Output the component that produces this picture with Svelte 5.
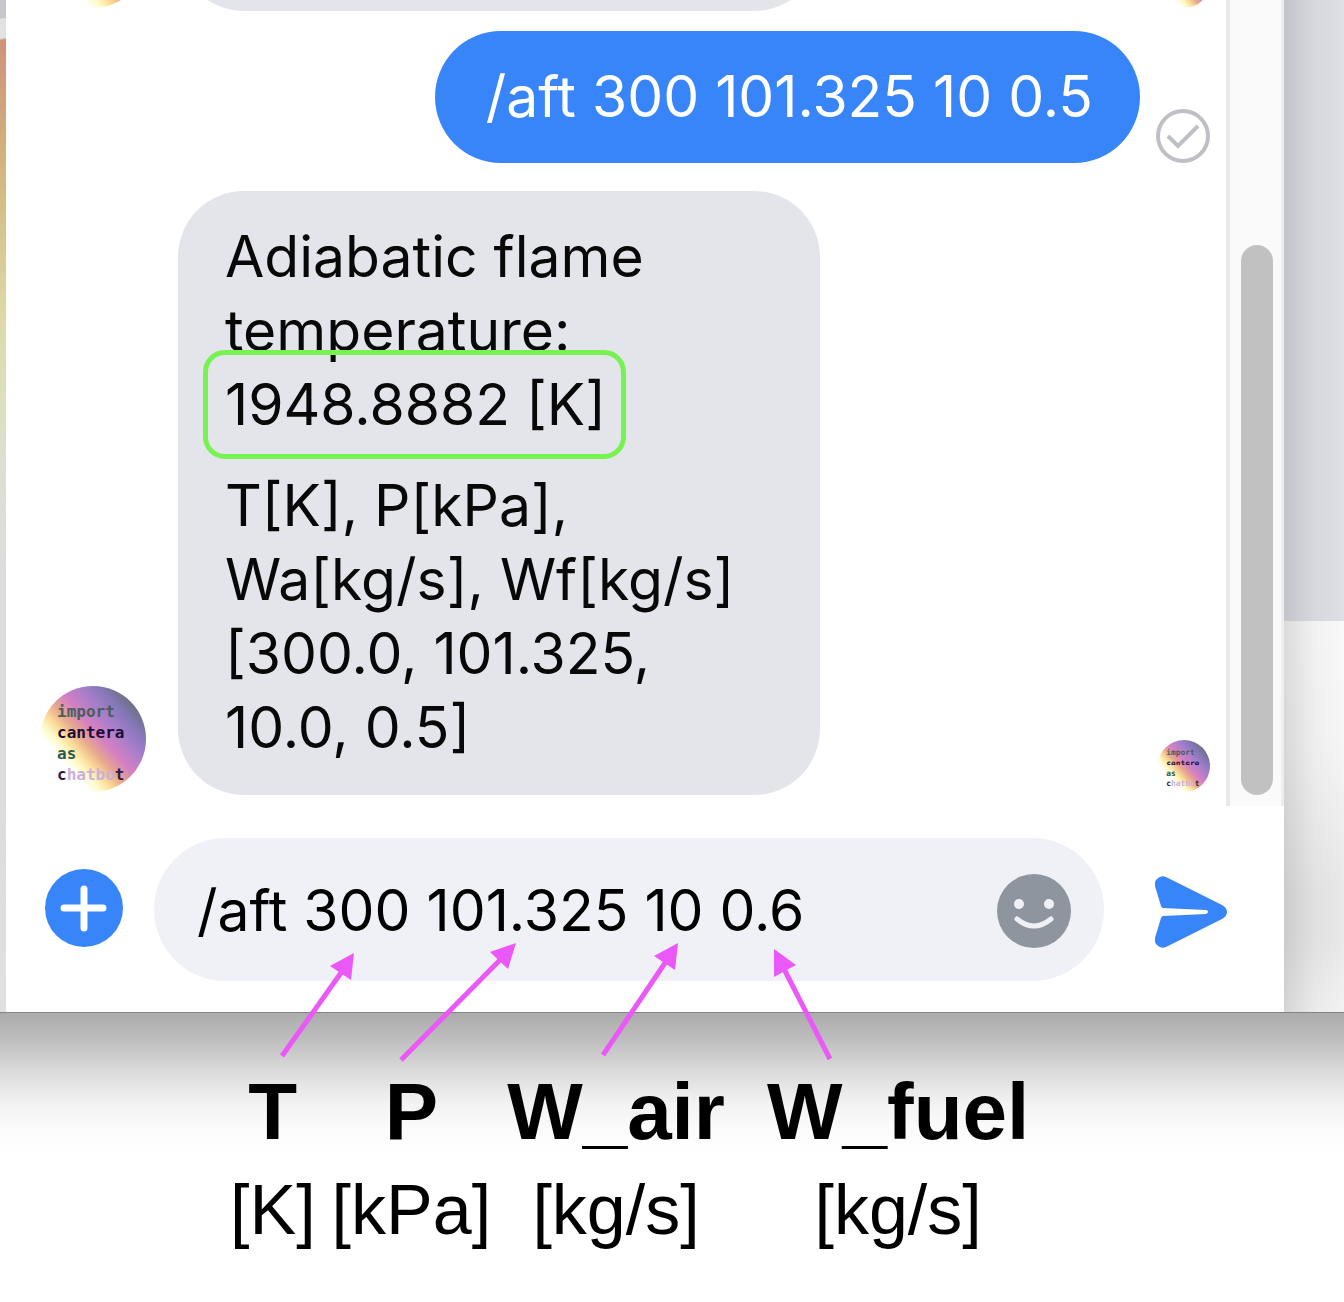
<script lang="ts">
  let draft = $state('/aft 300 101.325 10 0.6');

  const params = [
    { name: 'T', unit: '[K]' },
    { name: 'P', unit: '[kPa]' },
    { name: 'W_air', unit: '[kg/s]' },
    { name: 'W_fuel', unit: '[kg/s]' }
  ];

  const arrows = [
    { line: 'M282 1056L343 970', head: '354,953 330,966 351,980' },
    { line: 'M401 1060L502 958', head: '516,943 490,952 508,969' },
    { line: 'M603 1055L667 960', head: '678,943 654,956 675,970' },
    { line: 'M830 1059L783 967', head: '774,949 774,977 796,965' }
  ];
</script>

{#snippet avatar(size: string, id: string, lettered: boolean)}
  <svg class="avatar {size}" viewBox="0 0 106 106" role="img" aria-label="import cantera as chatbot">
    <defs>
      <linearGradient {id} gradientUnits="userSpaceOnUse" x1="24" y1="77" x2="93" y2="16">
        <stop offset="0" stop-color="#ffffff" />
        <stop offset="0.1" stop-color="#fffbcc" />
        <stop offset="0.2" stop-color="#fbdf9a" />
        <stop offset="0.33" stop-color="#e8a98c" />
        <stop offset="0.48" stop-color="#d680c2" />
        <stop offset="0.68" stop-color="#a67ecb" />
        <stop offset="0.84" stop-color="#8577b8" />
        <stop offset="1" stop-color="#6a7080" />
      </linearGradient>
    </defs>
    <circle cx="53" cy="53" r="53" fill="url(#{id})" />
    {#if lettered}
      <g class="logo-text">
        <text x="17" y="31" fill="#46605c">import</text>
        <text x="17" y="52" fill="#1c0c38">cantera</text>
        <text x="17" y="73" fill="#2c5a48">as</text>
        <text x="17" y="94" fill="#2a1c4c">c<tspan fill="#c9b0dc">hatbo</tspan>t</text>
      </g>
    {/if}
  </svg>
{/snippet}

<main class="page">
  <div class="desktop">
    <div class="edge-left"></div>
    <section class="window">
      <div class="history">
        <div class="messages">
          <div class="row previous">
            <div class="sender">{@render avatar('large', 'flame-a', false)}</div>
            <div class="bubble received stub"></div>
            <div class="status">{@render avatar('small', 'flame-b', false)}</div>
          </div>
          <div class="row outgoing">
            <p class="bubble sent">/aft 300 101.325 10 0.5</p>
            <div class="status">
              <svg class="check" viewBox="0 0 54 54" role="img" aria-label="Sent">
                <circle cx="27" cy="27" r="25" />
                <path d="M12 27L22 37L42 17" />
              </svg>
            </div>
          </div>
          <div class="row incoming">
            <div class="sender">{@render avatar('large', 'flame-c', true)}</div>
            <div class="bubble received">
              <p>Adiabatic flame<br />temperature:<br /><span class="result">1948.8882 [K]</span></p>
              <p>T[K], P[kPa],<br />Wa[kg/s], Wf[kg/s]<br />[300.0, 101.325,<br />10.0, 0.5]</p>
            </div>
            <div class="status">{@render avatar('small', 'flame-d', true)}</div>
          </div>
        </div>
        <div class="scrollbar"><div class="thumb"></div></div>
      </div>
      <form class="composer" onsubmit={(e) => e.preventDefault()}>
        <button class="plus" type="button" aria-label="More actions">
          <svg viewBox="0 0 78 78">
            <circle cx="39" cy="39" r="39" fill="#3785f8" />
            <path d="M39 20V59M19 39H58" stroke="#fff" stroke-width="7" stroke-linecap="round" />
          </svg>
        </button>
        <div class="field">
          <input type="text" aria-label="Message" bind:value={draft} />
          <button class="emoji" type="button" aria-label="Choose an emoji">
            <svg viewBox="0 0 74 74">
              <circle cx="37" cy="37" r="37" fill="#8e959f" />
              <circle cx="22" cy="30" r="5" fill="#f0f1f6" />
              <circle cx="52" cy="30" r="5" fill="#f0f1f6" />
              <path d="M20 45Q37 59 54 45" fill="none" stroke="#f0f1f6" stroke-width="5" stroke-linecap="round" />
            </svg>
          </button>
        </div>
        <button class="send" type="submit" aria-label="Send">
          <svg viewBox="0 0 72 72">
            <path
              fill="#3785f8"
              d="M11 1L67 29Q72 32 72 36Q72 40 67 43L11 71Q6 73 2 69Q-1 66 0 62L6 42Q7 40 8 40L51 38Q53 37 53 36Q53 34 51 34L8 32Q7 32 6 30L0 10Q-1 6 2 3Q6 -1 11 1Z"
            />
          </svg>
        </button>
      </form>
    </section>
    <div class="edge-right"></div>
  </div>

  <dl class="legend">
    {#each params as p}
      <div class="param">
        <dt>{p.name}</dt>
        <dd>{p.unit}</dd>
      </div>
    {/each}
  </dl>

  <svg class="arrows" viewBox="0 0 1344 1302" aria-hidden="true">
    {#each arrows as a}
      <path d={a.line} />
      <polygon points={a.head} />
    {/each}
  </svg>
</main>

<style>
  :global(body) {
    margin: 0;
    background: #fff;
  }
  .page {
    position: relative;
    overflow: hidden;
    color: #000;
    font-family: Inter, 'Liberation Sans', sans-serif;
  }
  p,
  dl,
  dd {
    margin: 0;
  }
  svg {
    display: block;
  }
  button {
    display: block;
    padding: 0;
    border: 0;
    background: none;
    cursor: pointer;
  }
  .desktop {
    display: flex;
    border-bottom: 1px solid #858585;
  }
  .edge-left {
    flex: 0 0 6px;
    background: linear-gradient(172deg, #c6c7cc 0 18px, #e2e2e2 19px 38px, #cf937a 40px, #d2a57c 110px, #d5be86 200px, #dcd9a6 310px, #dcdfb8 370px, #dedfd2 460px, #dcdcdc 570px, #dcdcdc 780px, #e0e0e0);
  }
  .edge-right {
    flex: 0 0 60px;
    background:
      linear-gradient(90deg, rgba(0, 0, 0, 0.12), rgba(0, 0, 0, 0.03) 50%, transparent),
      linear-gradient(#dedfe5 0 621px, #f9f9f9 621px, #f6f6f6 740px, #e8e8e8 890px, #e8e8e8 940px, #f2f2f2);
  }
  .window {
    flex: 1;
    min-width: 0;
    background: #fff;
  }
  .history {
    display: flex;
  }
  .messages {
    flex: 1;
    min-width: 0;
    padding-bottom: 11px;
  }
  .row {
    display: flex;
    align-items: flex-end;
  }
  .previous {
    height: 11px;
    overflow: hidden;
    margin-bottom: 20px;
  }
  .outgoing {
    justify-content: flex-end;
    margin-bottom: 28px;
  }
  .sender {
    flex: 0 0 172px;
    padding-bottom: 3px;
  }
  .avatar.large {
    width: 106px;
    height: 106px;
    margin-left: 34px;
  }
  .status {
    flex: 0 0 86px;
    box-sizing: border-box;
    padding: 0 16px 3px;
  }
  .incoming .status,
  .previous .status {
    margin-left: auto;
    padding-left: 18px;
  }
  .avatar.small {
    width: 52px;
    height: 52px;
  }
  .logo-text {
    font: bold 16px 'DejaVu Sans Mono', monospace;
  }
  .bubble {
    box-sizing: border-box;
    padding: 29px 47px;
    border-radius: 66px;
    font-size: 57px;
    line-height: 74px;
  }
  .sent {
    padding-left: 51px;
    background: #3785f8;
    color: #fff;
    white-space: nowrap;
  }
  .outgoing .status {
    padding-bottom: 0;
  }
  .check {
    width: 54px;
    height: 54px;
    fill: none;
    stroke: #bec0c6;
    stroke-width: 4;
  }
  .received {
    width: 642px;
    padding-bottom: 30px;
    background: #e4e5eb;
    color: #080808;
    white-space: nowrap;
  }
  .received p + p {
    margin-top: 27px;
  }
  .stub {
    height: 132px;
  }
  .result {
    position: relative;
  }
  .result::before {
    content: '';
    position: absolute;
    inset: -20px -20px -20px -22px;
    border: 5px solid #76f251;
    border-radius: 22px;
  }
  .scrollbar {
    flex: 0 0 58px;
    box-sizing: border-box;
    display: flex;
    align-items: flex-end;
    justify-content: center;
    padding: 0 0 11px 2px;
    border-left: 4px solid #e8e8e8;
    border-right: 3px solid #eeeeee;
    background: #fafafa;
  }
  .thumb {
    width: 32px;
    height: 550px;
    border-radius: 16px;
    background: #c1c1c1;
  }
  .composer {
    display: flex;
    align-items: center;
    padding: 32px 57px 31px 39px;
  }
  .plus,
  .plus svg {
    width: 78px;
    height: 78px;
  }
  .plus {
    margin-bottom: 4px;
  }
  .field {
    flex: 1;
    min-width: 0;
    box-sizing: border-box;
    display: flex;
    align-items: center;
    height: 143px;
    margin: 0 51px 0 31px;
    padding: 2px 33px 0 43px;
    border-radius: 72px;
    background: #f0f1f6;
  }
  input {
    flex: 1;
    min-width: 0;
    padding: 0;
    border: 0;
    outline: 0;
    background: none;
    color: #000;
    font: 57px/74px Inter, 'Liberation Sans', sans-serif;
  }
  .emoji,
  .emoji svg {
    width: 74px;
    height: 74px;
  }
  .send,
  .send svg {
    width: 72px;
    height: 72px;
  }
  .send {
    margin-top: 4px;
  }
  .legend {
    display: flex;
    gap: 16px;
    box-sizing: border-box;
    min-height: 289px;
    padding: 53px 0 0 230px;
    background: linear-gradient(#acacac, #bcbcbc 24px, #dcdcdc 60px, #f2f2f2 90px, #fbfbfb 116px, #fff 144px);
    font-family: 'Liberation Sans', Arial, sans-serif;
    text-align: center;
  }
  .param:last-child {
    margin-left: 26px;
  }
  dt {
    font-size: 80px;
    line-height: 92px;
    font-weight: bold;
  }
  dd {
    font-size: 70px;
    line-height: 104px;
  }
  .arrows {
    position: absolute;
    top: 0;
    left: 0;
    width: 1344px;
    height: 1302px;
    pointer-events: none;
    fill: #ea58f8;
  }
  .arrows path {
    fill: none;
    stroke: #ea58f8;
    stroke-width: 5;
  }
</style>
